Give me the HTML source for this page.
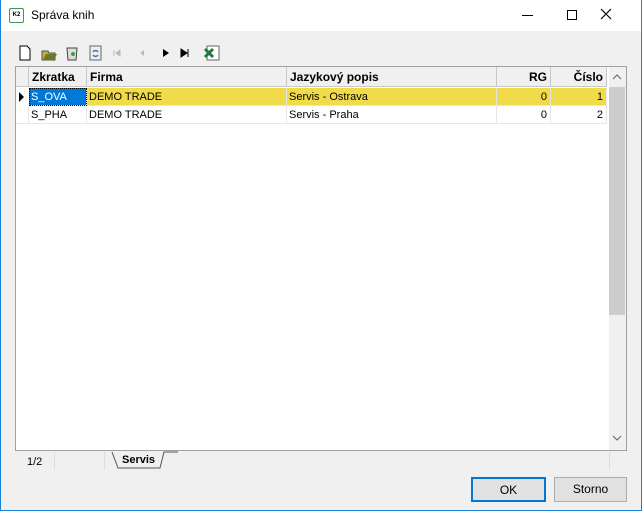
<!DOCTYPE html><html><head><style>
*{margin:0;padding:0;box-sizing:border-box}
body{width:642px;height:511px;background:#f0f0f0;font-family:"Liberation Sans",sans-serif;font-size:11px;position:relative;overflow:hidden}
.a{position:absolute}
.t{left:0;top:0;width:642px;height:31px;background:#fff}
.hd{font-weight:bold;font-size:12px;top:67px;height:20px;line-height:20px;background:#f0f0f0;border-right:1px solid #c8c8c8;border-bottom:1px solid #c8c8c8;padding:0 3px}
.c{height:18px;line-height:18px;padding:0 2px;border-right:1px solid #e6e6e6;border-bottom:1px solid #e6e6e6;white-space:nowrap}
.y{background:#f0dc4a}
.r{text-align:right;padding-right:3px}
.btn{top:477px;height:25px;background:#e1e1e1;border:1px solid #adadad;text-align:center;line-height:23px;font-size:12px}
</style></head><body>
<div class="a t"></div>
<div class="a" style="left:0;top:0;width:1px;height:511px;background:#1883d7"></div>
<div class="a" style="left:641px;top:0;width:1px;height:511px;background:#1883d7"></div>
<div class="a" style="left:0;top:510px;width:642px;height:1px;background:#1883d7"></div>
<div class="a" style="left:9px;top:8px;width:15px;height:15px;border:1px solid #3a9a5a;border-radius:2px;font-size:6px;font-weight:bold;line-height:13px;text-align:center">K2</div>
<div class="a" style="left:31px;top:8px;font-size:12px">Správa knih</div>
<div class="a" style="left:522px;top:15px;width:11px;height:1px;background:#000"></div>
<div class="a" style="left:567px;top:10px;width:10px;height:10px;border:1px solid #000"></div>
<svg class="a" style="left:600px;top:8px" width="12" height="12"><path d="M1 1l10 10M11 1L1 11" stroke="#000" stroke-width="1.2"/></svg>
<svg class="a" style="left:17px;top:44px" width="210" height="18">
<path d="M3 2h7l3 3v11H3z" fill="#fff" stroke="#000"/>
<path d="M25 7h6l1 2h6v7H25z" fill="#c9a93c" stroke="#554"/><path d="M26 16l3-6h11l-3 6z" fill="#6b7a2a"/>
<path d="M50 4h10l-1 12h-8z" fill="#ddd" stroke="#444"/><circle cx="56" cy="10" r="2" fill="#3a3"/>
<rect x="73" y="2" width="11" height="14" fill="#eee" stroke="#666"/><path d="M76 8a3 3 0 0 1 5 0M81 11a3 3 0 0 1-5 0" stroke="#47a" fill="none" stroke-width="1.5"/>
<path d="M97 6v6M99 9l4-3v6z" fill="#bbb" stroke="#bbb"/><path d="M123 9l4-3v6z" fill="#bbb"/>
<path d="M146 5l6 4-6 4z" fill="#000"/><path d="M164 5l6 4-6 4zM171 5v8" fill="#000" stroke="#000"/>
<rect x="190" y="2" width="12" height="14" fill="#fff" stroke="#666"/><path d="M188 5l8 8M196 5l-8 8" stroke="#1d7a3a" stroke-width="3"/>
</svg>
<div class="a" style="left:15px;top:66px;width:612px;height:385px;background:#fff;border:1px solid #a0a0a0"></div>
<div class="a hd" style="left:16px;width:13px"></div>
<div class="a hd" style="left:29px;width:58px">Zkratka</div>
<div class="a hd" style="left:87px;width:200px">Firma</div>
<div class="a hd" style="left:287px;width:210px">Jazykový popis</div>
<div class="a hd r" style="left:497px;width:54px">RG</div>
<div class="a hd r" style="left:551px;width:56px">Číslo</div>
<div class="a" style="left:19px;top:92px;width:0;height:0;border-left:5px solid #000;border-top:5px solid transparent;border-bottom:5px solid transparent"></div>
<div class="a c" style="left:29px;top:88px;width:58px;background:#0078d7;color:#fff;outline:1px dotted #000;outline-offset:-1px">S_OVA</div>
<div class="a c y" style="left:87px;top:88px;width:200px">DEMO TRADE</div>
<div class="a c y" style="left:287px;top:88px;width:210px">Servis - Ostrava</div>
<div class="a c y r" style="left:497px;top:88px;width:54px">0</div>
<div class="a c y r" style="left:551px;top:88px;width:56px">1</div>
<div class="a c" style="left:16px;top:106px;width:13px"></div>
<div class="a c" style="left:29px;top:106px;width:58px">S_PHA</div>
<div class="a c" style="left:87px;top:106px;width:200px">DEMO TRADE</div>
<div class="a c" style="left:287px;top:106px;width:210px">Servis - Praha</div>
<div class="a c r" style="left:497px;top:106px;width:54px">0</div>
<div class="a c r" style="left:551px;top:106px;width:56px">2</div>
<div class="a" style="left:609px;top:67px;width:17px;height:383px;background:#f0f0f0"></div>
<div class="a" style="left:609px;top:87px;width:16px;height:228px;background:#cdcdcd"></div>
<svg class="a" style="left:612px;top:74px" width="10" height="6"><path d="M1 5l4-4 4 4" stroke="#606060" fill="none"/></svg>
<svg class="a" style="left:612px;top:435px" width="10" height="6"><path d="M1 1l4 4 4-4" stroke="#606060" fill="none"/></svg>
<div class="a" style="left:27px;top:456px;font-size:11px">1/2</div>
<div class="a" style="left:54px;top:452px;width:1px;height:18px;background:#ddd"></div>
<div class="a" style="left:104px;top:452px;width:1px;height:18px;background:#ddd"></div>
<div class="a" style="left:609px;top:452px;width:1px;height:18px;background:#ddd"></div>
<svg class="a" style="left:108px;top:451px" width="75" height="20"><path d="M4 1l6 16h42l4-16h14" fill="none" stroke="#555"/></svg>
<div class="a" style="left:122px;top:454px;font-weight:bold;font-size:11px">Servis</div>
<div class="a btn" style="left:471px;width:75px;border:2px solid #0078d7">OK</div>
<div class="a btn" style="left:554px;width:73px">Storno</div>
</body></html>
